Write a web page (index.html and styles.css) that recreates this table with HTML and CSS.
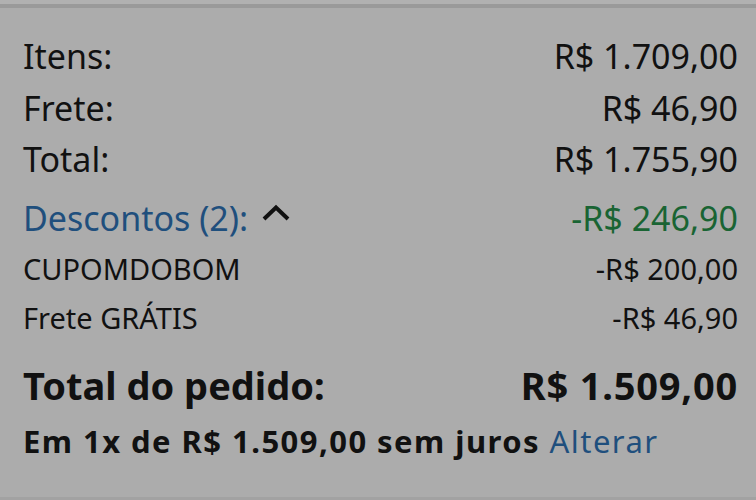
FILE: index.html
```html
<!DOCTYPE html>
<html lang="pt-BR">
<head>
<meta charset="utf-8">
<link rel="stylesheet" href="styles.css">
</head>
<body>
<div class="summary">
  <div class="row"><span>Itens:</span><span>R$ 1.709,00</span></div>
  <div class="row"><span>Frete:</span><span>R$ 46,90</span></div>
  <div class="row"><span>Total:</span><span>R$ 1.755,90</span></div>
  <div class="row discounts">
    <span class="link">Descontos (2):<svg class="chev" width="30" height="18" viewBox="0 0 30 18"><path d="M3 15 L15 3.5 L27 15" fill="none" stroke="#111" stroke-width="4"/></svg></span>
    <span class="green">-R$ 246,90</span>
  </div>
  <div class="row small"><span>CUPOMDOBOM</span><span>-R$ 200,00</span></div>
  <div class="row small"><span>Frete GRÁTIS</span><span>-R$ 46,90</span></div>
  <div class="row grand"><span>Total do pedido:</span><span class="amt">R$ 1.509,00</span></div>
  <div class="install">Em 1x de R$ 1.509,00 sem juros <span class="link">Alterar</span></div>
</div>
</body>
</html>
```
FILE: styles.css
```css
html, body {
  margin: 0;
  padding: 0;
}
body {
  width: 756px;
  height: 500px;
  background: #acacac;
  font-family: "Noto Sans", "Open Sans", sans-serif;
  color: #111;
  overflow: hidden;
  box-sizing: border-box;
  border-top: 4px solid #b1b1b1;
  border-bottom: 3px solid #a2a2a2;
}
.summary {
  border-top: 4px solid #9a9a9a;
  padding: 23px 18px 0 23px;
}
.row {
  display: flex;
  justify-content: space-between;
  align-items: baseline;
  font-size: 34px;
  line-height: 51.5px;
}
.discounts {
  margin-top: 7px;
}
.link {
  color: #1f4f7d;
}
.green {
  color: #196433;
}
.chev {
  margin-left: 13px;
  vertical-align: 9px;
}
.small {
  font-size: 29px;
  line-height: 49px;
}
.grand {
  font-size: 38px;
  font-weight: 700;
  margin-top: 18px;
}
.grand .amt {
  letter-spacing: 0.8px;
}
.install {
  font-size: 31px;
  font-weight: 700;
  letter-spacing: 1.45px;
  line-height: 52px;
  margin-top: 3px;
}
.install .link {
  font-weight: 400;
}
```
